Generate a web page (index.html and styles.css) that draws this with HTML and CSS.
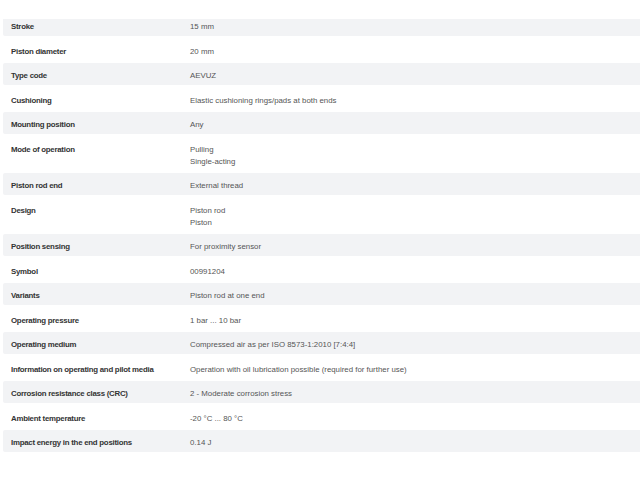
FILE: index.html
```html
<!DOCTYPE html>
<html lang="en">
<head>
<meta charset="utf-8">
<title>Technical data</title>
<link rel="stylesheet" href="styles.css">
</head>
<body>
<div class="viewport">
  <div class="specs">
    <div class="row shaded"><div class="label">Stroke</div><div class="value">15 mm</div></div>
    <div class="row"><div class="label">Piston diameter</div><div class="value">20 mm</div></div>
    <div class="row shaded"><div class="label">Type code</div><div class="value">AEVUZ</div></div>
    <div class="row"><div class="label">Cushioning</div><div class="value">Elastic cushioning rings/pads at both ends</div></div>
    <div class="row shaded"><div class="label">Mounting position</div><div class="value">Any</div></div>
    <div class="row"><div class="label">Mode of operation</div><div class="value">Pulling<br>Single-acting</div></div>
    <div class="row shaded"><div class="label">Piston rod end</div><div class="value">External thread</div></div>
    <div class="row"><div class="label">Design</div><div class="value">Piston rod<br>Piston</div></div>
    <div class="row shaded"><div class="label">Position sensing</div><div class="value">For proximity sensor</div></div>
    <div class="row"><div class="label">Symbol</div><div class="value">00991204</div></div>
    <div class="row shaded"><div class="label">Variants</div><div class="value">Piston rod at one end</div></div>
    <div class="row"><div class="label">Operating pressure</div><div class="value">1 bar ... 10 bar</div></div>
    <div class="row shaded"><div class="label">Operating medium</div><div class="value">Compressed air as per ISO 8573-1:2010 [7:4:4]</div></div>
    <div class="row"><div class="label">Information on operating and pilot media</div><div class="value">Operation with oil lubrication possible (required for further use)</div></div>
    <div class="row shaded"><div class="label">Corrosion resistance class (CRC)</div><div class="value">2 - Moderate corrosion stress</div></div>
    <div class="row"><div class="label">Ambient temperature</div><div class="value">-20 °C ... 80 °C</div></div>
    <div class="row shaded"><div class="label">Impact energy in the end positions</div><div class="value">0.14 J</div></div>
  </div>
</div>
</body>
</html>
```

FILE: styles.css
```css
html, body {
  margin: 0;
  padding: 0;
  background: #ffffff;
}

body {
  font-family: "Liberation Sans Narrow", "Liberation Sans", Arial, sans-serif;
  font-stretch: condensed;
  font-size: 7.85px;
  line-height: 12px;
  color: #4a4a4a;
}

.viewport {
  margin-top: 19px;
  overflow: hidden;
}

.specs {
  margin: -5.5px 0 0 3px;
  display: flex;
  flex-direction: column;
  gap: 2px;
}

.row {
  display: grid;
  grid-template-columns: 179px 1fr;
  padding: 7.5px 0 3px 8px;
  border-radius: 2px 0 0 2px;
}

.row.shaded {
  background: #f2f3f5;
}

.label {
  font-weight: bold;
  letter-spacing: -0.25px;
  color: #333333;
}

.value {
  color: #555555;
}
```
